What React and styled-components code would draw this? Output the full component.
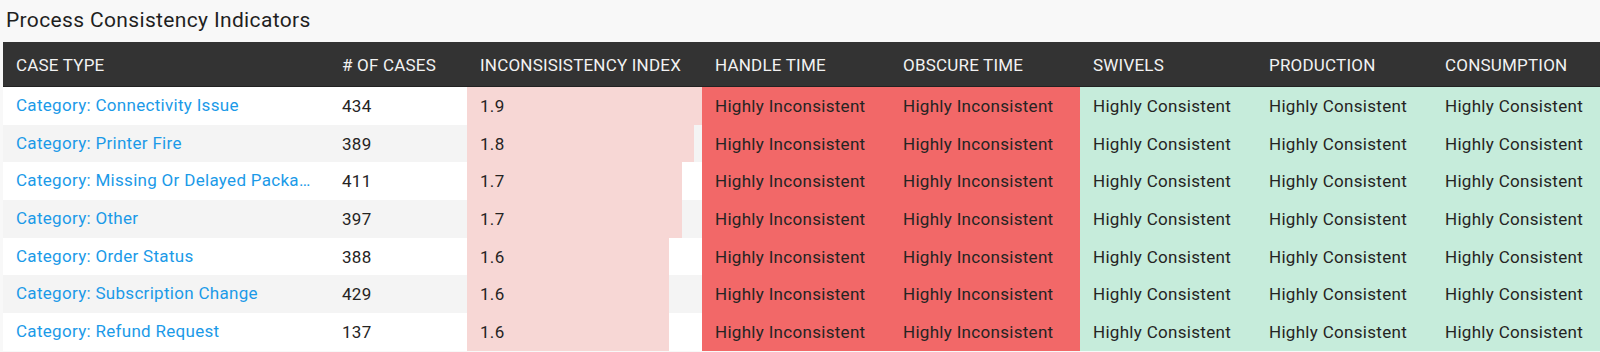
import React from 'react'
import styled, { createGlobalStyle } from 'styled-components'

const GlobalStyle = createGlobalStyle`
  body {
    margin: 0;
    background: #f8f8f8;
    font-family: Roboto, "Liberation Sans", sans-serif;
  }
`

const columns = '326px 138px 235px 188px 190px 176px 176px 168px'

const rows = [
  { type: 'Category: Connectivity Issue', cases: 434, index: '1.9', bar: 235 },
  { type: 'Category: Printer Fire', cases: 389, index: '1.8', bar: 227 },
  { type: 'Category: Missing Or Delayed Package Delivery', cases: 411, index: '1.7', bar: 215 },
  { type: 'Category: Other', cases: 397, index: '1.7', bar: 215 },
  { type: 'Category: Order Status', cases: 388, index: '1.6', bar: 202 },
  { type: 'Category: Subscription Change', cases: 429, index: '1.6', bar: 202 },
  { type: 'Category: Refund Request', cases: 137, index: '1.6', bar: 202 },
]

const headers = [
  'CASE TYPE',
  '# OF CASES',
  'INCONSISISTENCY INDEX',
  'HANDLE TIME',
  'OBSCURE TIME',
  'SWIVELS',
  'PRODUCTION',
  'CONSUMPTION',
]

function App() {
  return (
    <Page>
      <GlobalStyle />
      <Title>Process Consistency Indicators</Title>
      <Table>
        <HeaderRow>
          {headers.map((h) => (
            <HeaderCell key={h}>{h}</HeaderCell>
          ))}
        </HeaderRow>
        {rows.map((r, i) => (
          <Row key={r.type} $striped={i % 2 === 1}>
            <LinkCell title={r.type}>{r.type}</LinkCell>
            <Cell>{r.cases}</Cell>
            <BarCell>
              <Bar style={{ width: r.bar }}>{r.index}</Bar>
            </BarCell>
            <Cell $tone="bad">Highly Inconsistent</Cell>
            <Cell $tone="bad">Highly Inconsistent</Cell>
            <Cell $tone="good">Highly Consistent</Cell>
            <Cell $tone="good">Highly Consistent</Cell>
            <Cell $tone="good">Highly Consistent</Cell>
          </Row>
        ))}
      </Table>
    </Page>
  )
}

export default App

const Page = styled.div`
  width: 1600px;
  height: 352px;
  overflow: hidden;
  padding-top: 8px;
  box-sizing: border-box;
`

const Title = styled.h1`
  margin: 0 0 10px 6px;
  font-size: 21px;
  line-height: 24px;
  font-weight: 400;
  letter-spacing: 0.35px;
  color: #1f1f1f;
`

const Table = styled.div`
  margin-left: 3px;
  overflow: hidden;
`

const HeaderRow = styled.div`
  display: grid;
  grid-template-columns: ${columns};
  height: 45px;
  padding-top: 2px;
  background: #333333;
  border-bottom: 1px solid #222;
  box-sizing: border-box;
`

const HeaderCell = styled.div`
  display: flex;
  align-items: center;
  padding-left: 13px;
  color: #f2f2f2;
  font-size: 17px;
  letter-spacing: 0.2px;
  white-space: nowrap;
`

const Row = styled.div`
  display: grid;
  grid-template-columns: ${columns};
  height: 37.7px;
  background: ${({ $striped }) => ($striped ? '#f4f4f4' : '#ffffff')};
`

const toneColors = {
  bad: '#f26868',
  good: '#c6ecdb',
}

const Cell = styled.div`
  display: flex;
  align-items: center;
  padding: 0 12px 0 13px;
  font-size: 17px;
  letter-spacing: 0.3px;
  color: #252423;
  white-space: nowrap;
  overflow: hidden;
  background: ${({ $tone }) => toneColors[$tone] || 'transparent'};
`

const LinkCell = styled(Cell)`
  display: block;
  line-height: 37.7px;
  color: #1b9ae8;
  text-overflow: ellipsis;
`

const BarCell = styled.div`
  display: flex;
`

const Bar = styled.div`
  display: flex;
  align-items: center;
  padding-left: 13px;
  box-sizing: border-box;
  background: #f7d7d5;
  font-size: 17px;
  letter-spacing: 0.3px;
  color: #252423;
`
